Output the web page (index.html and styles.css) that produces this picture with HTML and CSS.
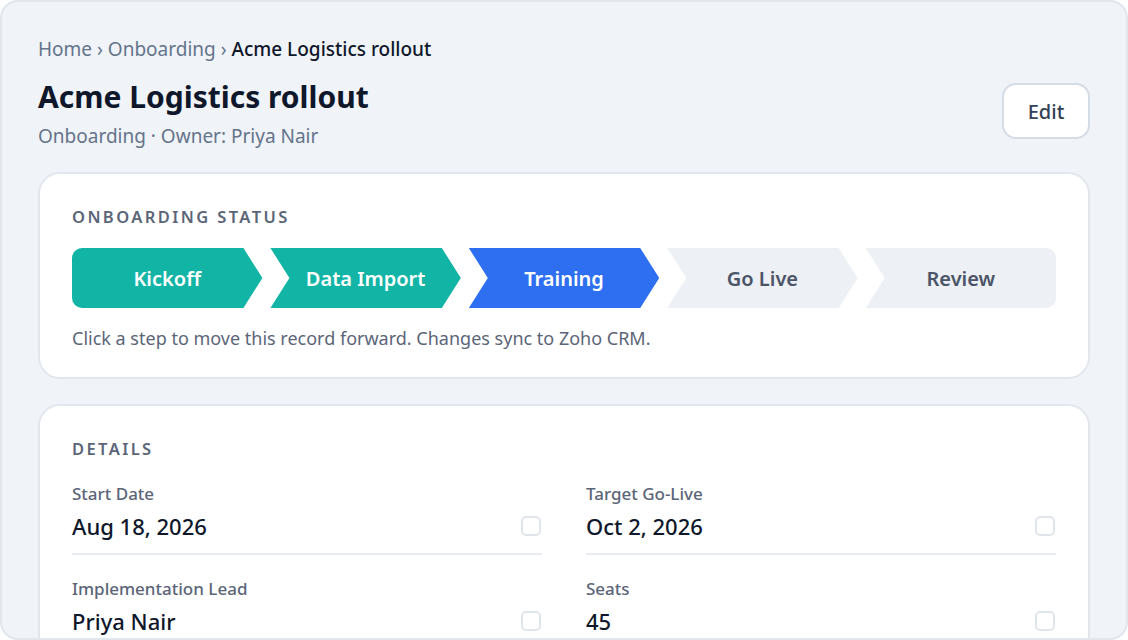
FILE: index.html
```html
<!DOCTYPE html>
<html lang="en">
<head>
<meta charset="UTF-8" />
<title>Acme Logistics rollout</title>
<link rel="stylesheet" href="styles.css">
</head>
<body>

<div class="page">
    <div class="header">
        <div>
            <div class="crumbs">Home › Onboarding › <b>Acme Logistics rollout</b></div>
            <h1>Acme Logistics rollout</h1>
            <div class="sub">Onboarding · Owner: Priya Nair</div>
        </div>
        <button class="edit">Edit</button>
    </div>

    <div class="card">
        <h3>Onboarding Status</h3>
        <div class="steps">
            <div class="step done first">Kickoff</div>
            <div class="step done">Data Import</div>
            <div class="step current">Training</div>
            <div class="step">Go Live</div>
            <div class="step last">Review</div>
        </div>
        <p class="hint">Click a step to move this record forward. Changes sync to Zoho CRM.</p>
    </div>

    <div class="card">
        <h3>Details</h3>
        <div class="fields">
            <div class="field">
                <label>Start Date</label>
                <div class="value"><span>Aug 18, 2026</span><i class="box"></i></div>
            </div>
            <div class="field">
                <label>Target Go-Live</label>
                <div class="value"><span>Oct 2, 2026</span><i class="box"></i></div>
            </div>
            <div class="field">
                <label>Implementation Lead</label>
                <div class="value"><span>Priya Nair</span><i class="box"></i></div>
            </div>
            <div class="field">
                <label>Seats</label>
                <div class="value"><span>45</span><i class="box"></i></div>
            </div>
        </div>
    </div>
</div>

</body>
</html>
```

FILE: styles.css
```css
body {
    margin: 0;
    font-family: "Noto Sans", "Open Sans", sans-serif;
    color: #0f172a;
    background: #fff;
}
.page {
    box-sizing: border-box;
    height: 640px;
    overflow: hidden;
    background: #f0f3f8;
    border: 2px solid #e2e7ee;
    border-radius: 18px;
    padding: 34px 36px 0;
}
.header {
    display: flex;
    justify-content: space-between;
    align-items: flex-start;
    margin-bottom: 22px;
}
.crumbs {
    font-size: 19px;
    color: #64748b;
    line-height: 26px;
}
.crumbs b {
    font-weight: 500;
    color: #0f172a;
}
h1 {
    margin: 15px 0 5px;
    font-size: 30px;
    line-height: 40px;
    font-weight: 700;
}
.sub {
    font-size: 19px;
    color: #64748b;
    line-height: 28px;
}
.edit {
    font-family: inherit;
    font-size: 20px;
    font-weight: 500;
    color: #334155;
    background: #fff;
    border: 2px solid #d5dce6;
    border-radius: 14px;
    width: 88px;
    height: 56px;
    margin-top: 47px;
}
.card {
    background: #fff;
    border: 2px solid #e2e7ee;
    border-radius: 22px;
    padding: 31px 32px 27px;
    margin-bottom: 25px;
}
.card h3 {
    margin: 0 0 19px;
    font-size: 16.5px;
    font-weight: 600;
    letter-spacing: 2.4px;
    text-transform: uppercase;
    color: #5b6578;
    line-height: 24px;
}
.steps {
    display: flex;
    gap: 8px;
}
.step {
    flex: 1;
    height: 60px;
    display: flex;
    align-items: center;
    justify-content: center;
    font-size: 20px;
    font-weight: 600;
    background: #edf0f5;
    color: #4b5567;
    clip-path: polygon(0 0, calc(100% - 19px) 0, 100% 50%, calc(100% - 19px) 100%, 0 100%, 19px 50%);
}
.step.first {
    border-radius: 10px 0 0 10px;
    clip-path: polygon(0 0, calc(100% - 19px) 0, 100% 50%, calc(100% - 19px) 100%, 0 100%);
}
.step.last {
    border-radius: 0 10px 10px 0;
    clip-path: polygon(0 0, 100% 0, 100% 100%, 0 100%, 19px 50%);
}
.step.done {
    background: #12b5a5;
    color: #fff;
}
.step.current {
    background: #2d6ff0;
    color: #fff;
}
.hint {
    margin: 18px 0 0;
    font-size: 18px;
    line-height: 24px;
    color: #5b6578;
}
.fields {
    display: grid;
    grid-template-columns: 1fr 1fr;
    column-gap: 44px;
    row-gap: 22px;
    padding-top: 2px;
}
.field label {
    display: block;
    font-size: 17px;
    font-weight: 500;
    color: #5b6578;
    line-height: 24px;
}
.value {
    display: flex;
    justify-content: space-between;
    align-items: center;
    font-size: 22px;
    font-weight: 500;
    line-height: 32px;
    padding: 4px 0 11px;
    border-bottom: 2px solid #e8ecf1;
}
.box {
    box-sizing: border-box;
    width: 20px;
    height: 20px;
    border: 2px solid #e0e5ec;
    border-radius: 5px;
    margin-right: 1px;
}
```
